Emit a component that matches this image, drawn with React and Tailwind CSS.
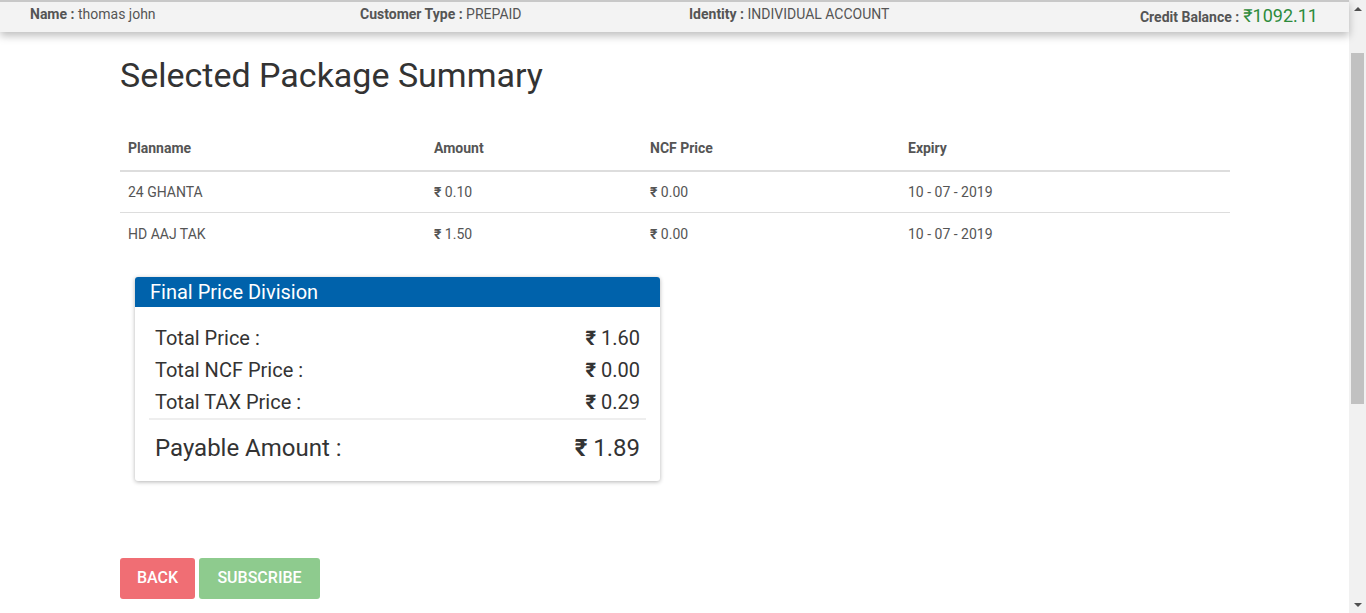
import React from 'react';

const plans = [
  { name: '24 GHANTA', amount: '0.10', ncf: '0.00', expiry: '10 - 07 - 2019' },
  { name: 'HD AAJ TAK', amount: '1.50', ncf: '0.00', expiry: '10 - 07 - 2019' },
];

const Rupee = ({ className = '' }) => <span className={`font-bold ${className}`}>₹</span>;

const Header = () => (
  <div className="border-t-2 border-[#c8c8c8] bg-[#f3f3f3] h-[32px] shadow-[0_4px_8px_rgba(0,0,0,0.25)] flex items-center pl-[30px] pr-[31px] text-[14px] text-[#555] relative z-10">
    <div className="w-[330px] -mt-[5px]">
      <span className="font-bold">Name :</span> thomas john
    </div>
    <div className="w-[329px] -mt-[5px]">
      <span className="font-bold">Customer Type :</span> PREPAID
    </div>
    <div className="flex-1 -mt-[5px]">
      <span className="font-bold">Identity :</span> INDIVIDUAL ACCOUNT
    </div>
    <div className="flex items-baseline -mt-[3px]">
      <span className="font-bold">Credit Balance :</span>
      <span className="text-[18px] text-[#2e8b3c] ml-[4px]">₹1092.11</span>
    </div>
  </div>
);

const Scrollbar = () => (
  <div className="w-[17px] h-screen bg-[#f1f1f1] flex flex-col items-center">
    <div className="h-[17px] flex items-center justify-center">
      <div className="w-0 h-0 border-l-[4px] border-r-[4px] border-b-[4px] border-l-transparent border-r-transparent border-b-[#505050]" />
    </div>
    <div className="h-[36px]" />
    <div className="w-[13px] h-[351px] bg-[#c1c1c1]" />
    <div className="flex-1" />
    <div className="h-[17px] flex items-center justify-center">
      <div className="w-0 h-0 border-l-[4px] border-r-[4px] border-t-[4px] border-l-transparent border-r-transparent border-t-[#505050]" />
    </div>
  </div>
);

export default function App() {
  return (
    <div className="flex h-screen overflow-hidden bg-white font-['Roboto','Liberation_Sans',sans-serif]">
      <div className="flex-1 flex flex-col">
        <Header />
        <div className="pl-[120px] pr-[119px]">
          <h1 className="text-[34px] text-[#333] leading-[1.2] mt-[23px] mb-[32px]">Selected Package Summary</h1>

          <table className="w-full text-[14px] text-[#555] border-collapse">
            <thead>
              <tr className="border-b-2 border-[#ddd] text-left">
                <th className="font-bold px-[8px] h-[43px] w-[306px]">Planname</th>
                <th className="font-bold px-[8px] w-[216px]">Amount</th>
                <th className="font-bold px-[8px] w-[258px]">NCF Price</th>
                <th className="font-bold px-[8px]">Expiry</th>
              </tr>
            </thead>
            <tbody>
              {plans.map((p, i) => (
                <tr key={p.name} className={i === 0 ? 'border-b border-[#ddd]' : ''}>
                  <td className="px-[8px] h-[42px]">{p.name}</td>
                  <td className="px-[8px]"><Rupee /> {p.amount}</td>
                  <td className="px-[8px]"><Rupee /> {p.ncf}</td>
                  <td className="px-[8px]">{p.expiry}</td>
                </tr>
              ))}
            </tbody>
          </table>

          <div className="ml-[15px] mt-[22px] w-[525px] rounded-[3px] bg-white shadow-[0_1px_4px_rgba(0,0,0,0.3)] overflow-hidden">
            <div className="bg-[#0062ab] text-white text-[20px] h-[30px] leading-[30px] px-[15px]">Final Price Division</div>
            <div className="px-[14px] pt-[15px] pb-[17px] text-[#333]">
              <div className="px-[6px] text-[20px] leading-[32px]">
                <div className="flex justify-between"><span>Total Price :</span><span><Rupee /> 1.60</span></div>
                <div className="flex justify-between"><span>Total NCF Price :</span><span><Rupee /> 0.00</span></div>
                <div className="flex justify-between"><span>Total TAX Price :</span><span><Rupee /> 0.29</span></div>
              </div>
              <div className="border-t-2 border-[#eee]" />
              <div className="px-[6px] flex justify-between text-[24px] leading-[32px] mt-[12px]">
                <span>Payable Amount :</span><span><Rupee /> 1.89</span>
              </div>
            </div>
          </div>

          <div className="flex gap-[4px] mt-[77px]">
            <button className="h-[41px] w-[75px] rounded-[3px] bg-[#f06e74] text-white text-[16px] font-medium">BACK</button>
            <button className="h-[41px] w-[121px] rounded-[3px] bg-[#8ecb8e] text-white text-[16px] font-medium">SUBSCRIBE</button>
          </div>
        </div>
      </div>
      <Scrollbar />
    </div>
  );
}
